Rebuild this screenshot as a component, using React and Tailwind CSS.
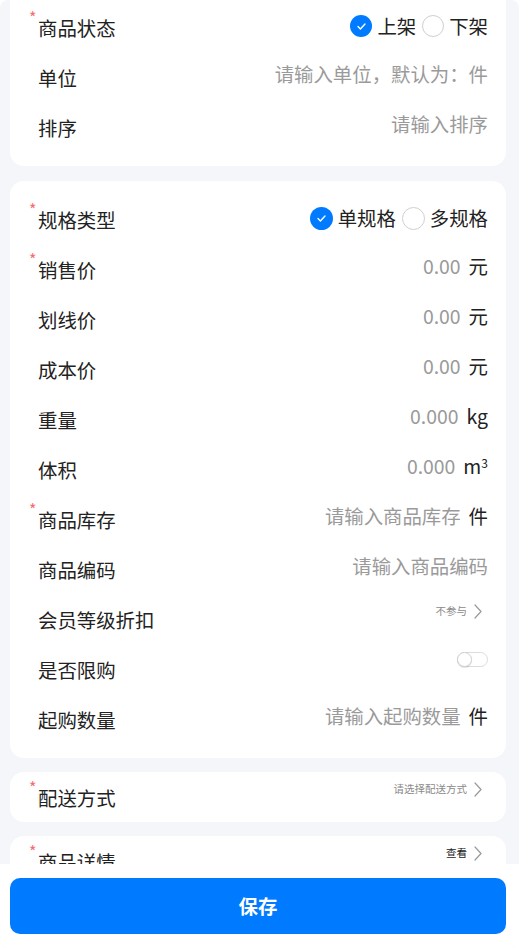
import React from "react";

const FONT = { fontFamily: '"Noto Sans CJK SC", "Noto Sans", sans-serif' };

function Star() {
  return (
    <span className="absolute left-[-9px] top-[7px] text-[16px] leading-[16px] text-[#f56c6c]">*</span>
  );
}

function Label({ required, children }) {
  return (
    <div className="relative pt-[12px] text-[19.4px] leading-[28px] text-[#222]">
      {required && <Star />}
      {children}
    </div>
  );
}

function Chevron({ color = "#999" }) {
  return (
    <svg width="8" height="15" viewBox="0 0 8 15" fill="none">
      <path d="M1 1 L7 7.5 L1 14" stroke={color} strokeWidth="1.2" strokeLinecap="round" strokeLinejoin="round" />
    </svg>
  );
}

function Radio({ checked, size = 22 }) {
  if (checked) {
    return (
      <span
        className="flex items-center justify-center rounded-full bg-[#007aff]"
        style={{ width: size, height: size }}
      >
        <svg width="9" height="7" viewBox="0 0 9 7" fill="none">
          <path d="M1 3.6 L3.4 6 L8 1" stroke="#fff" strokeWidth="1.4" strokeLinecap="round" strokeLinejoin="round" />
        </svg>
      </span>
    );
  }
  return (
    <span
      className="block rounded-full border border-[#cfcfcf] bg-white"
      style={{ width: size, height: size }}
    />
  );
}

function RadioGroup({ options, size }) {
  return (
    <div className="flex items-center pt-[10px] text-[19.4px] leading-[28px] text-[#222]">
      {options.map((o, i) => (
        <div key={o.label} className={"flex items-center gap-[5px] " + (i > 0 ? "ml-[6px]" : "")}>
          <Radio checked={o.checked} size={size} />
          <span>{o.label}</span>
        </div>
      ))}
    </div>
  );
}

function Row({ label, required, children }) {
  return (
    <div className="flex h-[50px] items-start justify-between">
      <Label required={required}>{label}</Label>
      {children}
    </div>
  );
}

function Value({ text, unit, placeholder = true }) {
  return (
    <div className="flex items-center pt-[8px] text-[19.4px] leading-[28px]">
      <span className={placeholder ? "text-[#9a9a9a]" : "text-[#222]"}>{text}</span>
      {unit && <span className="ml-[8px] text-[#222]">{unit}</span>}
    </div>
  );
}

function Link({ text, dark }) {
  return (
    <div className="mr-[6px] flex items-center gap-[7px] pt-[9px]">
      <span className={"text-[10.5px] leading-[16px] " + (dark ? "text-[#222]" : "text-[#8a8a8a]")}>{text}</span>
      <Chevron />
    </div>
  );
}

function Card({ children, className = "" }) {
  return (
    <div className={"rounded-[14px] bg-white pl-[28px] pr-[18px] " + className}>{children}</div>
  );
}

export default function App() {
  return (
    <div className="h-[948px] w-[532px] bg-white" style={FONT}>
      <div className="flex h-[948px] w-[519px] flex-col overflow-hidden rounded-[8px] bg-[#f5f6fa]">
        <div className="flex-1 overflow-hidden pl-[10px] pr-[13px]">
          <Card className="mt-[-12px] py-[14px]">
            <Row label="商品状态" required>
              <RadioGroup
                size={22}
                options={[
                  { label: "上架", checked: true },
                  { label: "下架", checked: false },
                ]}
              />
            </Row>
            <Row label="单位">
              <Value text="请输入单位，默认为：件" />
            </Row>
            <Row label="排序">
              <Value text="请输入排序" />
            </Row>
          </Card>

          <Card className="mt-[15px] pt-[13px] pb-[14px]">
            <Row label="规格类型" required>
              <RadioGroup
                size={23}
                options={[
                  { label: "单规格", checked: true },
                  { label: "多规格", checked: false },
                ]}
              />
            </Row>
            <Row label="销售价" required>
              <Value text="0.00" unit="元" />
            </Row>
            <Row label="划线价">
              <Value text="0.00" unit="元" />
            </Row>
            <Row label="成本价">
              <Value text="0.00" unit="元" />
            </Row>
            <Row label="重量">
              <Value text="0.000" unit="kg" />
            </Row>
            <Row label="体积">
              <Value
                text="0.000"
                unit={
                  <span>
                    m<sup className="text-[12px]">3</sup>
                  </span>
                }
              />
            </Row>
            <Row label="商品库存" required>
              <Value text="请输入商品库存" unit="件" />
            </Row>
            <Row label="商品编码">
              <Value text="请输入商品编码" />
            </Row>
            <Row label="会员等级折扣">
              <Link text="不参与" />
            </Row>
            <Row label="是否限购">
              <div className="pt-[8px]">
                <div className="relative h-[15px] w-[31px] rounded-full border border-[#dcdcdc] bg-white">
                  <div className="absolute left-[-1px] top-[-1px] h-[15px] w-[15px] rounded-full border border-[#d0d0d0] bg-white shadow-[0_1px_1px_rgba(0,0,0,0.12)]" />
                </div>
              </div>
            </Row>
            <Row label="起购数量">
              <Value text="请输入起购数量" unit="件" />
            </Row>
          </Card>

          <Card className="mt-[14px]">
            <Row label="配送方式" required>
              <Link text="请选择配送方式" />
            </Row>
          </Card>

          <Card className="mt-[14px]">
            <Row label="商品详情" required>
              <Link text="查看" dark />
            </Row>
          </Card>
        </div>

        <div className="h-[84px] bg-white pl-[10px] pr-[13px] pt-[14px]">
          <button className="flex h-[56px] w-full items-center justify-center rounded-[10px] bg-[#007aff] text-[19.4px] font-bold text-white">
            保存
          </button>
        </div>
      </div>
    </div>
  );
}
